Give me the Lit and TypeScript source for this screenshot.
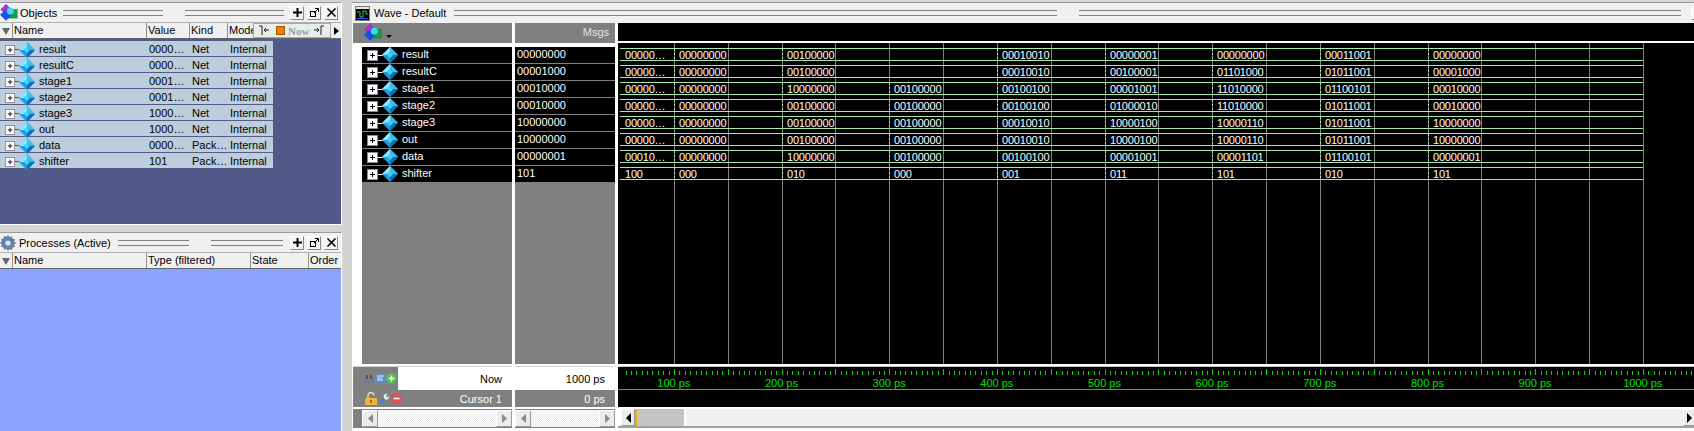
import { LitElement, html, css, svg } from 'lit';
import { customElement } from 'lit/decorators.js';

const TIMES = [50, 100, 200, 300, 400, 500, 600, 700, 800, 1000];
const px = (t: number) => Math.round(566.3 + 1.0767 * t);
const WAVE_LEFT = 618;

const SIGNALS = [
  { name: 'result', value: '0000…', kind: 'Net', msg: '00000000', wave: ['00000…', '00000000', '00100000', '', '00010010', '00000001', '00000000', '00011001', '00000000'] },
  { name: 'resultC', value: '0000…', kind: 'Net', msg: '00001000', wave: ['00000…', '00000000', '00100000', '', '00010010', '00100001', '01101000', '01011001', '00001000'] },
  { name: 'stage1', value: '0001…', kind: 'Net', msg: '00010000', wave: ['00000…', '00000000', '10000000', '00100000', '00100100', '00001001', '11010000', '01100101', '00010000'] },
  { name: 'stage2', value: '0001…', kind: 'Net', msg: '00010000', wave: ['00000…', '00000000', '00100000', '00100000', '00100100', '01000010', '11010000', '01011001', '00010000'] },
  { name: 'stage3', value: '1000…', kind: 'Net', msg: '10000000', wave: ['00000…', '00000000', '00100000', '00100000', '00010010', '10000100', '10000110', '01011001', '10000000'] },
  { name: 'out', value: '1000…', kind: 'Net', msg: '10000000', wave: ['00000…', '00000000', '00100000', '00100000', '00010010', '10000100', '10000110', '01011001', '10000000'] },
  { name: 'data', value: '0000…', kind: 'Pack…', msg: '00000001', wave: ['00010…', '00000000', '10000000', '00100000', '00100100', '00001001', '00001101', '01100101', '00000001'] },
  { name: 'shifter', value: '101', kind: 'Pack…', msg: '101', wave: ['100', '000', '010', '000', '001', '011', '101', '010', '101'] },
];

const diamond = () => html`<svg class="diamond" width="16" height="16" viewBox="0 0 16 16">
  <polygon points="8,0 16,8 8,16 0,8" fill="#1c9fdc" />
  <polygon points="8,0 8,5 5,8 0,8" fill="#8fe6ff" />
  <polygon points="8,0 16,8 11,8 8,5" fill="#35bdec" />
  <polygon points="16,8 8,16 8,11 11,8" fill="#0b6fb4" />
  <polygon points="8,5 11,8 8,11 5,8" fill="#43d0f5" />
</svg>`;

const plus = () => html`<svg class="plus" width="11" height="11" viewBox="0 0 11 11">
  <rect x="0.5" y="0.5" width="10" height="10" fill="#fff" stroke="#8a8a98" />
  <path d="M3 5.5h5M5.500 3v5" stroke="#000" fill="none" />
</svg>`;

const layersIcon = () => html`<svg width="18" height="17" viewBox="0 0 21 19">
  <polygon points="7,0 13,6 7,12 1,6" fill="#b030d8" stroke="#7a1aa0" stroke-width="0.6" />
  <rect x="9" y="6" width="11" height="10" fill="#14a04a" stroke="#0d6e33" stroke-width="0.6" />
  <polygon points="7,6 14,12 7,19 0,12" fill="#1a50e0" />
  <circle cx="12" cy="8" r="4" fill="#3fd8f0" />
</svg>`;

const gearIcon = () => html`<svg width="16" height="16" viewBox="0 0 16 16">
  <path d="M8 .5l1.400 2 2.300-.8.4 2.400 2.400.4-.8 2.300 2 1.200-2 1.400.8 2.300-2.400.4-.4 2.400-2.300-.8L8 15.500l-1.400-2-2.300.8-.4-2.400-2.400-.4.8-2.300-2-1.400 2-1.200-.8-2.300 2.400-.4.4-2.400 2.300.8z" fill="#5f86a8" stroke="#3c5a78" stroke-width="0.5" />
  <circle cx="8" cy="8" r="2.600" fill="#dbe6f0" />
</svg>`;

const waveIcon = () => html`<svg width="15" height="15" viewBox="0 0 15 15">
  <rect x="0.5" y="0.5" width="14" height="14" fill="#000" stroke="#777" />
  <rect x="1" y="1" width="13" height="2" fill="#e8e8e8" />
  <path d="M2 6h3v5h3V5h3v3h2" fill="none" stroke="#2fd060" />
  <path d="M2 12.500h11" stroke="#4040f0" />
</svg>`;

const winButtons = () => html`<div class="win-btns">
  <span class="win-btn"><svg width="11" height="11" viewBox="0 0 11 11"><path d="M5.500 1v9M1 5.500h9" stroke="#000" stroke-width="2" fill="none" /></svg></span>
  <span class="win-btn"><svg width="11" height="11" viewBox="0 0 11 11"><rect x="1.500" y="4.500" width="5" height="5" fill="none" stroke="#000" /><path d="M5 6l4-4M6 1.500h3.500V5" stroke="#000" fill="none" /></svg></span>
  <span class="win-btn"><svg width="11" height="11" viewBox="0 0 11 11"><path d="M1.500 1.500l8 8M9.500 1.500l-8 8" stroke="#000" stroke-width="1.600" fill="none" /></svg></span>
</div>`;

const grip = () => html`<div class="grip"><span class="lines"></span><span class="dots"></span><span class="lines"></span></div>`;

const scrollBtn = (dir: 'l' | 'r') => html`<span class="sb-btn"><svg width="7" height="9" viewBox="0 0 7 9"><polygon points=${dir === 'l' ? '6,0 6,9 1,4.5' : '1,0 1,9 6,4.5'} fill="#8a8a8a" /></svg></span>`;

@customElement('app-root')
export class AppRoot extends LitElement {
  static override styles = css`
    :host {
      display: block;
      width: 1694px;
      height: 431px;
      overflow: hidden;
      font: 11px 'Liberation Sans', Arial, sans-serif;
      color: #000;
    }

    .root {
      display: grid;
      grid-template-columns: 342px 1fr;
      column-gap: 10px;
      height: 429px;
      padding-top: 2px;
      background: #d4d4d4;
    }

    .left {
      display: flex;
      flex-direction: column;
      gap: 7px;
      min-height: 0;
    }

    .panel {
      display: flex;
      flex-direction: column;
      background: #f0f0f0;
      border-top: 1px solid #9a9a9a;
      border-right: 1px solid #fff;
      min-height: 0;
    }

    .panel--objects {
      height: 221px;
      border-bottom: 1px solid #fff;
    }

    .panel--procs {
      flex: 1;
    }

    .title {
      display: flex;
      align-items: center;
      gap: 2px;
      height: 19px;
      flex: none;
      white-space: nowrap;
      background: #f0f0f0;
    }

    .title svg {
      flex: none;
    }

    .panel--procs .title {
      gap: 3px;
    }

    .grip {
      flex: 1;
      display: flex;
      align-items: center;
      gap: 3px;
      margin-left: 4px;
    }

    .lines {
      flex: 1;
      height: 4px;
      border-top: 1px solid #808080;
      border-bottom: 1px solid #808080;
    }

    .dots {
      width: 16px;
      height: 7px;
      background-image: radial-gradient(#777 0.5px, transparent 0.7px);
      background-size: 2px 2px;
    }

    .win-btns {
      display: flex;
      gap: 3px;
      margin: 0 3px 0 4px;
    }

    .win-btn {
      width: 12px;
      height: 12px;
      display: flex;
      align-items: center;
      justify-content: center;
      background: #f4f4f4;
      border: 1px solid;
      border-color: #fff #888 #888 #fff;
    }

    .head {
      position: relative;
      display: grid;
      grid-template-columns: 12px 134px 43px 38px 1fr;
      height: 15px;
      flex: none;
      border-top: 1px solid #b0b0b0;
      border-bottom: 1px solid #666;
      background: #f0f0f0;
      line-height: 15px;
    }

    .head--procs {
      grid-template-columns: 12px 134px 104px 58px 1fr;
    }

    .head > span {
      padding-left: 1px;
      border-left: 1px solid #909090;
      overflow: hidden;
      white-space: nowrap;
    }

    .head > .sort {
      border-left: 0;
      padding: 5px 0 0 2px;
      line-height: 0;
    }

    .toolbar {
      position: absolute;
      left: 253px;
      top: 0;
      width: 78px;
      height: 15px;
      display: flex;
      align-items: center;
      background: #e8efe8;
      border: 1px solid #a8a8a8;
      box-sizing: border-box;
    }

    .toolbar .now {
      color: #90a0a8;
      font: bold 11px 'Liberation Serif', serif;
      margin-left: 3px;
    }

    .toolbar .stop {
      width: 7px;
      height: 7px;
      background: #f08000;
      border: 1px solid #a85000;
      margin-left: 6px;
    }

    .toolbar svg {
      margin-left: 4px;
      flex: none;
    }

    .more {
      position: absolute;
      left: 334px;
      top: 4px;
      width: 0;
      height: 0;
      border-left: 5px solid #000;
      border-top: 4px solid transparent;
      border-bottom: 4px solid transparent;
    }

    .obj-body {
      flex: 1;
      background: #525a8a;
      padding-top: 2px;
    }

    .obj-row {
      display: grid;
      grid-template-columns: 39px 110px 43px 38px 1fr;
      width: 273px;
      height: 15px;
      line-height: 17px;
      background: #bccddc;
      border-bottom: 1px solid #525a8a;
      white-space: nowrap;
    }

    .obj-icons {
      display: flex;
      align-items: center;
      padding-left: 5px;
    }

    .obj-icons .plus {
      width: 10px;
      height: 10px;
      flex: none;
    }

    .obj-icons .link {
      width: 5px;
      height: 1px;
      background: #3a6a90;
      flex: none;
    }

    .obj-icons .diamond {
      margin-left: -1px;
      flex: none;
    }

    .procs-body {
      flex: 1;
      background: #8ca4ff;
    }

    .wave {
      display: flex;
      flex-direction: column;
      background: #fff;
      border-top: 1px solid #9a9a9a;
      padding-left: 1px;
      min-width: 0;
    }

    .wave > .title {
      height: 20px;
      padding-left: 2px;
      gap: 4px;
      background: #f0f0f0;
    }

    .wave > .title .win-btns {
      margin-right: -45px;
      margin-left: 6px;
    }

    .cols {
      display: grid;
      grid-template-columns: 159px 100px 1fr;
      column-gap: 3px;
      flex: 1;
      min-width: 0;
    }

    .col {
      display: flex;
      flex-direction: column;
      min-width: 0;
    }

    .col-head {
      height: 18px;
      flex: none;
      background: #808080;
      border-bottom: 2px solid #808080;
      display: flex;
      align-items: center;
      box-sizing: content-box;
    }

    .col-head--names {
      padding-left: 11px;
      gap: 4px;
    }

    .col-head--names .caret {
      width: 0;
      height: 0;
      margin-top: 8px;
      border-top: 3px solid #000;
      border-left: 3px solid transparent;
      border-right: 3px solid transparent;
    }

    .col-head--msgs {
      justify-content: flex-end;
      padding-right: 6px;
      color: #e4e4e4;
    }

    .col-head--wave {
      background: #000;
      border-bottom: 2px solid #fff;
    }

    .sig-body {
      height: 320px;
      flex: none;
      background: #808080;
      border-top: 3px solid #fff;
      box-sizing: border-box;
      margin-top: 1px;
    }

    .sig-body--names {
      border-left: 9px solid #fff;
    }

    .sig-row {
      height: 15px;
      padding-bottom: 1px;
      line-height: 15px;
      background: #000;
      color: #fff;
      border-bottom: 1px solid #808080;
      display: flex;
      align-items: center;
      white-space: nowrap;
    }

    .sig-row--msg {
      padding-left: 2px;
    }

    .sig-row .plus {
      margin: 2px 0 0 5px;
      flex: none;
    }

    .sig-row .link {
      width: 5px;
      height: 1px;
      margin-top: 2px;
      background: #fff;
      flex: none;
    }

    .sig-row .diamond {
      margin: 0 4px 0 -1px;
      flex: none;
    }

    .canvas {
      position: relative;
      height: 321px;
      flex: none;
      background: #000;
      overflow: hidden;
      box-sizing: border-box;
      padding: 5px 0 0 2px;
    }

    .grid-line {
      position: absolute;
      top: 0;
      bottom: 0;
      width: 1px;
      background: #808080;
    }

    .trace {
      position: relative;
      display: flex;
      height: 13px;
      margin-bottom: 4px;
    }

    .seg {
      position: relative;
      flex: none;
      box-sizing: border-box;
      height: 13px;
      line-height: 11px;
      padding: 1px 0 0 5px;
      color: #fff;
      letter-spacing: -0.2px;
      border-top: 1px solid #a8e8a8;
      border-bottom: 1px solid #a8e8a8;
      white-space: nowrap;
    }

    .seg + .seg::before {
      content: '';
      position: absolute;
      left: 0;
      top: 0;
      bottom: 0;
      width: 1px;
      background: repeating-linear-gradient(#a8e8a8 0 2px, transparent 2px 4px);
    }

    .rule {
      height: 3px;
      flex: none;
      background: #fff;
      border-bottom: 1px solid #d0d0d0;
      box-sizing: border-box;
    }

    .now-row {
      height: 23px;
      flex: none;
      box-sizing: border-box;
      background: #fff;
      display: flex;
      align-items: center;
      justify-content: flex-end;
      padding-right: 10px;
    }

    .tool-icons {
      align-self: stretch;
      width: 45px;
      margin-right: auto;
      background: #808080;
      display: flex;
      align-items: center;
      padding-left: 10px;
      box-sizing: border-box;
    }

    .tool-icons svg {
      flex: none;
    }

    .cursor-row {
      height: 17px;
      flex: none;
      background: #808080;
      color: #fff;
      display: flex;
      align-items: center;
      justify-content: flex-end;
      padding-right: 10px;
    }

    .cursor-row .tool-icons {
      padding-left: 12px;
      gap: 2px;
    }

    .ruler {
      position: relative;
      height: 23px;
      flex: none;
      background: #000;
      border-bottom: 1px solid #808080;
      box-sizing: border-box;
      overflow: hidden;
    }

    .ruler svg {
      display: block;
    }

    .labels {
      display: flex;
      color: #00e000;
      margin: 2px 0 0 2px;
      white-space: nowrap;
    }

    .labels span {
      flex: none;
      text-align: center;
    }

    .wave-foot {
      height: 17px;
      flex: none;
      background: #000;
    }

    .sb {
      height: 19px;
      flex: none;
      margin-top: 2px;
      display: flex;
      align-items: stretch;
      background: #808080;
      box-sizing: border-box;
      border-bottom: 1px solid #808080;
      padding-top: 1px;
    }

    .sb--names {
      padding-left: 9px;
    }

    .sb-btn {
      width: 16px;
      flex: none;
      display: flex;
      align-items: center;
      justify-content: center;
      box-sizing: border-box;
      background: #ececec;
      border: 1px solid;
      border-color: #fff #999 #999 #fff;
    }

    .sb-track {
      flex: 1;
      background: repeating-conic-gradient(#fff 0 25%, #eaeaea 0 50%) 0 0 / 2px 2px;
    }

    .sb--wave {
      background: #fff;
      padding-left: 3px;
      border-bottom: 2px solid #a0a0a0;
      padding-top: 0;
    }

    .sb--wave .sb-btn {
      width: 14px;
    }

    .sb--wave .arrow {
      width: 0;
      height: 0;
      border-top: 5px solid transparent;
      border-bottom: 5px solid transparent;
    }

    .sb--wave .arrow--l {
      border-right: 5px solid #000;
    }

    .sb--wave .arrow--r {
      border-left: 5px solid #000;
    }

    .thumb {
      width: 47px;
      flex: none;
      background: #c4c4c4;
      border-left: 2px solid #f0b000;
      border-right: 2px solid #fff;
    }

    .sb--wave .sb-track {
      background: #f0f0f0;
    }

    .sb--wave .sb-btn:last-child {
      width: 12px;
      margin-right: -1px;
    }
  `;

  private _trace(wave: string[]) {
    // an empty entry continues the previous value
    const segs: { text: string; from: number; to: number }[] = [];
    wave.forEach((text, i) => {
      if (text) segs.push({ text, from: px(TIMES[i]), to: px(TIMES[i + 1]) });
      else segs[segs.length - 1].to = px(TIMES[i + 1]);
    });
    return html`<div class="trace">
      ${segs.map((s) => html`<div class="seg" style="width:${s.to - s.from}px">${s.text}</div>`)}
    </div>`;
  }

  private _gridLines() {
    const lines = [];
    for (let t = 100; t <= 1000; t += 50) {
      lines.push(html`<div class="grid-line" style="left:${px(t) - WAVE_LEFT}px"></div>`);
    }
    return lines;
  }

  private _ticks() {
    const marks = [];
    for (let t = 55; t <= 1050; t += 5) {
      const x = px(t) - WAVE_LEFT + 0.5;
      marks.push(svg`<line x1=${x} x2=${x} y1=${t % 50 === 0 ? 2 : 4} y2="8" stroke="#00d800" />`);
    }
    return html`<svg width="1076" height="8" shape-rendering="crispEdges">${marks}</svg>`;
  }

  override render() {
    const step = 107.67;
    const labels = [100, 200, 300, 400, 500, 600, 700, 800, 900, 1000];
    return html`
      <div class="root">
        <div class="left">
          <section class="panel panel--objects">
            <div class="title">${layersIcon()}<span>Objects</span>${grip()}${winButtons()}</div>
            <div class="head">
              <span class="sort"><svg width="8" height="7" viewBox="0 0 8 7"><polygon points="0,0 8,0 4,7" fill="#666" /></svg></span>
              <span>Name</span><span>Value</span><span>Kind</span><span>Mode</span>
              <div class="toolbar">
                <svg width="12" height="11" viewBox="0 0 12 11"><path d="M1 1h3v9M11 5H6M8 3L6 5l2 2" fill="none" stroke="#222" /></svg>
                <i class="stop"></i><span class="now">Now</span>
                <svg width="12" height="11" viewBox="0 0 12 11"><path d="M1 5h5M4 3l2 2-2 2M8 10V1h3" fill="none" stroke="#222" /></svg>
              </div>
              <i class="more"></i>
            </div>
            <div class="obj-body">
              ${SIGNALS.map(
                (s) => html`<div class="obj-row">
                  <div class="obj-icons">${plus()}<i class="link"></i>${diamond()}</div>
                  <span>${s.name}</span><span>${s.value}</span><span>${s.kind}</span><span>Internal</span>
                </div>`
              )}
            </div>
          </section>
          <section class="panel panel--procs">
            <div class="title">${gearIcon()}<span>Processes (Active)</span>${grip()}${winButtons()}</div>
            <div class="head head--procs">
              <span class="sort"><svg width="8" height="7" viewBox="0 0 8 7"><polygon points="0,0 8,0 4,7" fill="#666" /></svg></span>
              <span>Name</span><span>Type (filtered)</span><span>State</span><span>Order</span>
            </div>
            <div class="procs-body"></div>
          </section>
        </div>

        <section class="wave">
          <div class="title">${waveIcon()}<span>Wave - Default</span>${grip()}${winButtons()}</div>
          <div class="cols">
            <div class="col">
              <div class="col-head col-head--names">${layersIcon()}<i class="caret"></i></div>
              <div class="sig-body sig-body--names">
                ${SIGNALS.map(
                  (s) => html`<div class="sig-row">${plus()}<i class="link"></i>${diamond()}<span>${s.name}</span></div>`
                )}
              </div>
              <div class="rule"></div>
              <div class="now-row">
                <div class="tool-icons">
                  <svg width="12" height="11" viewBox="0 0 12 11"><path d="M1 9h10M2 9V6M10 9V6" stroke="#4a7ab0" fill="none" /><path d="M3 2h2v4H3zM7 1l2 2v3H7z" fill="#505060" /></svg>
                  <svg width="11" height="11" viewBox="0 0 11 11"><rect width="11" height="11" fill="#5a8cc8" /><path d="M2 3h7M2 5h5M2 7h6" stroke="#e8f0f8" /></svg>
                  <svg width="11" height="11" viewBox="0 0 11 11"><circle cx="5.500" cy="5.500" r="5.500" fill="#58b858" /><path d="M2.500 5.500h6M5.500 2.500v6" stroke="#e8ffe8" stroke-width="1.500" /></svg>
                </div>
                Now
              </div>
              <div class="cursor-row">
                <div class="tool-icons">
                  <svg width="12" height="13" viewBox="0 0 12 13"><path d="M3 6V3.500a3 3 0 016 0" fill="none" stroke="#e8e0c0" stroke-width="1.400" /><rect y="6" width="12" height="7" fill="#f0b838" /><rect x="5" y="8" width="2" height="3" fill="#a07010" /></svg>
                  <svg width="10" height="12" viewBox="0 0 10 12"><path d="M1.500 10.500L6 5" stroke="#3f7fe8" stroke-width="2.600" fill="none" /><path d="M4.500 3.500a3 3 0 014-2.500L7 3l1 1.500L10 3a3 3 0 01-4 3.500z" fill="#e4ecf4" /></svg>
                  <svg width="11" height="11" viewBox="0 0 11 11"><circle cx="5.500" cy="5.500" r="5.500" fill="#e05050" /><path d="M2.500 5.500h6" stroke="#fff" stroke-width="1.600" /></svg>
                </div>
                Cursor 1
              </div>
              <div class="sb sb--names">${scrollBtn('l')}<span class="sb-track"></span>${scrollBtn('r')}</div>
            </div>

            <div class="col">
              <div class="col-head col-head--msgs">Msgs</div>
              <div class="sig-body">
                ${SIGNALS.map((s) => html`<div class="sig-row sig-row--msg">${s.msg}</div>`)}
              </div>
              <div class="rule"></div>
              <div class="now-row">1000 ps</div>
              <div class="cursor-row">0 ps</div>
              <div class="sb">${scrollBtn('l')}<span class="sb-track"></span>${scrollBtn('r')}</div>
            </div>

            <div class="col">
              <div class="col-head col-head--wave"></div>
              <div class="canvas">
                ${this._gridLines()}
                ${SIGNALS.map((s) => this._trace(s.wave))}
              </div>
              <div class="rule"></div>
              <div class="ruler">
                ${this._ticks()}
                <div class="labels">
                  ${labels.map((l) => html`<span style="width:${step}px">${l} ps</span>`)}
                </div>
              </div>
              <div class="wave-foot"></div>
              <div class="sb sb--wave">
                <span class="sb-btn"><i class="arrow arrow--l"></i></span>
                <span class="thumb"></span>
                <span class="sb-track"></span>
                <span class="sb-btn"><i class="arrow arrow--r"></i></span>
              </div>
            </div>
          </div>
        </section>
      </div>
    `;
  }
}
